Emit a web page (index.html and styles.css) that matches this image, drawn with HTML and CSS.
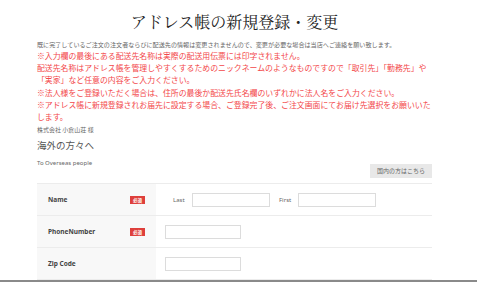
FILE: index.html
```html
<!DOCTYPE html>
<html lang="ja">
<head>
    <meta charset="UTF-8">
    <meta name="viewport" content="width=device-width, initial-scale=1.0">
    <title>アドレス帳の新規登録・変更</title>
    <link rel="stylesheet" href="styles.css">
</head>
<body>
    <div class="page">
        <h1 class="title">アドレス帳の新規登録・変更</h1>

        <p class="lead">既に完了しているご注文の注文者ならびに配送先の情報は変更されませんので、変更が必要な場合は当店へご連絡を願い致します。</p>
        <p class="notice">※入力欄の最後にある配送先名称は実際の配送用伝票には印字されません。<br>配送先名称はアドレス帳を管理しやすくするためのニックネームのようなものですので「取引先」「勤務先」や「実家」など任意の内容をご入力ください。<br>※法人様をご登録いただく場合は、住所の最後か配送先氏名欄のいずれかに法人名をご入力ください。<br>※アドレス帳に新規登録されお届先に設定する場合、ご登録完了後、ご注文画面にてお届け先選択をお願いいたします。</p>

        <p class="customer">株式会社 小倉山荘 様</p>

        <h2 class="section-title">海外の方々へ</h2>
        <p class="section-sub">To Overseas people</p>

        <div class="switch-row">
            <button class="switch-btn">国内の方はこちら</button>
        </div>

        <table class="form-table">
            <tr>
                <th><div class="head-cell"><span class="label">Name</span><span class="badge">必須</span></div></th>
                <td>
                    <div class="name-fields">
                        <span class="sub-label">Last</span>
                        <input type="text" class="input input-name">
                        <span class="sub-label">First</span>
                        <input type="text" class="input input-name">
                    </div>
                </td>
            </tr>
            <tr>
                <th><div class="head-cell"><span class="label">PhoneNumber</span><span class="badge">必須</span></div></th>
                <td><input type="text" class="input"></td>
            </tr>
            <tr>
                <th><div class="head-cell"><span class="label">Zip Code</span></div></th>
                <td><input type="text" class="input"></td>
            </tr>
        </table>
    </div>
    <div class="bottom-bar"></div>
</body>
</html>
```

FILE: styles.css
```css
body {
    margin: 0;
    padding: 0 8px 0 0;
    background-color: #fff;
    font-family: "Noto Sans CJK JP", "Noto Sans", sans-serif;
    color: #555;
}

.page {
    width: 395px;
    margin: 0 auto;
    padding-top: 10px;
}

.title {
    font-family: "Noto Serif CJK JP", "Liberation Serif", "Noto Sans CJK JP", serif;
    font-weight: normal;
    font-size: 16px;
    color: #222;
    text-align: center;
    margin: 0 0 7px;
    line-height: 24px;
}

.lead {
    font-size: 6.1px;
    line-height: 10px;
    margin: -1px 0 0;
    color: #666;
}

.notice {
    font-size: 7.88px;
    line-height: 12.2px;
    color: #f3474a;
    margin: 0 0 2px;
}

.customer {
    font-size: 6px;
    line-height: 10px;
    margin: 0 0 2px;
    color: #666;
}

.section-title {
    font-size: 9.5px;
    font-weight: normal;
    line-height: 16px;
    margin: 0 0 5px;
    color: #555;
}

.section-sub {
    font-family: "Noto Sans", sans-serif;
    font-size: 6px;
    line-height: 10px;
    margin: 0;
    color: #666;
}

.switch-row {
    display: flex;
    justify-content: flex-end;
    margin-top: -4px;
    padding-bottom: 5px;
}

.switch-btn {
    font-family: "Noto Sans CJK JP", sans-serif;
    font-size: 6px;
    color: #666;
    background-color: #e8e8e8;
    border: none;
    padding: 3px 6px;
    line-height: 8px;
    height: 14px;
    width: 62px;
}

.form-table {
    width: 100%;
    border-collapse: collapse;
    border-top: 1px solid #ececec;
}

.form-table th,
.form-table td {
    height: 31px;
    border-bottom: 1px solid #ececec;
    padding: 0;
}

.form-table th {
    width: 119px;
    background-color: #f8f8f8;
    text-align: left;
    padding: 0 11px;
    box-sizing: border-box;
}

.head-cell {
    display: flex;
    align-items: center;
    justify-content: space-between;
}

.head-cell .label {
    font-family: "Noto Sans", sans-serif;
    font-size: 6.5px;
    font-weight: bold;
    color: #444;
}

.badge {
    background-color: #de3f3b;
    color: #fff;
    font-size: 4.5px;
    line-height: 8px;
    height: 8px;
    padding: 0 3px;
}

.form-table td {
    padding-left: 9px;
}

.name-fields {
    display: flex;
    align-items: center;
    padding-left: 8px;
}

.sub-label {
    font-family: "Noto Sans", sans-serif;
    font-size: 6px;
    color: #666;
    width: 11px;
    margin-right: 8px;
}

.input {
    display: block;
    width: 76px;
    height: 14px;
    box-sizing: border-box;
    border: 1px solid #dcdcdc;
    padding: 0;
    margin: 0;
    background: #fff;
}

.input-name {
    width: 78px;
    margin-right: 9px;
}

.bottom-bar {
    position: fixed;
    left: 0;
    right: 0;
    bottom: 0;
    height: 2px;
    background-color: #8a8a8a;
}
```
